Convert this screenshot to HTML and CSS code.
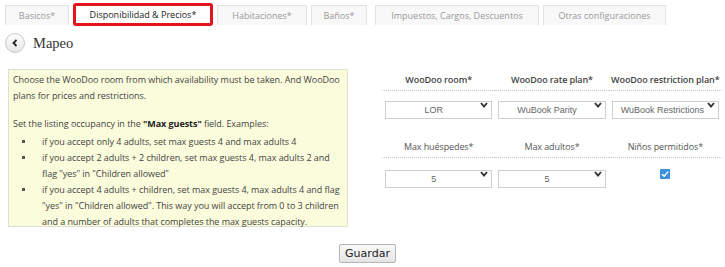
FILE: index.html
```html
<!DOCTYPE html>
<html lang="es">
<head>
    <meta charset="UTF-8">
    <meta name="viewport" content="width=device-width, initial-scale=1.0">
    <title>Mapeo</title>
    <link rel="stylesheet" href="styles.css">
</head>
<body>

<div class="tabs">
    <div class="tab tab-basicos">Basicos*</div>
    <div class="tab tab-active">Disponibilidad &amp; Precios*</div>
    <div class="tab tab-habitaciones">Habitaciones*</div>
    <div class="tab tab-banos">Baños*</div>
    <div class="tab tab-impuestos">Impuestos, Cargos, Descuentos</div>
    <div class="tab tab-otras">Otras configuraciones</div>
</div>

<div class="title-row">
    <button class="back-button" aria-label="Volver">
        <svg width="8" height="8" viewBox="0 0 8 8"><polyline points="5.5,1 2.5,4 5.5,7" fill="none" stroke="#222" stroke-width="1.8"/></svg>
    </button>
    <h2 class="title">Mapeo</h2>
</div>

<div class="mapping">
    <div class="help-box">
        <p>Choose the WooDoo room from which availability must be taken. And WooDoo plans for prices and restrictions.</p>
        <p class="tight">Set the listing occupancy in the <b>"Max guests"</b> field. Examples:</p>
        <ul>
            <li>if you accept only 4 adults, set max guests 4 and max adults 4</li>
            <li>if you accept 2 adults + 2 children, set max guests 4, max adults 2 and flag "yes" in "Children allowed"</li>
            <li>if you accept 4 adults + children, set max guests 4, max adults 4 and flag "yes" in "Children allowed". This way you will accept from 0 to 3 children and a number of adults that completes the max guests capacity.</li>
        </ul>
    </div>

    <div class="fields">
        <div class="field-head strong">WooDoo room*</div>
        <div class="field-head strong">WooDoo rate plan*</div>
        <div class="field-head strong">WooDoo restriction plan*</div>

        <div class="field-cell">
            <div class="select-wrap">
                <select class="select"><option>LOR</option></select>
                <svg class="chevron" width="8" height="6" viewBox="0 0 8 6"><polyline points="1,1 4,4.5 7,1" fill="none" stroke="#333" stroke-width="1.9"/></svg>
            </div>
        </div>
        <div class="field-cell">
            <div class="select-wrap">
                <select class="select"><option>WuBook Parity</option></select>
                <svg class="chevron" width="8" height="6" viewBox="0 0 8 6"><polyline points="1,1 4,4.5 7,1" fill="none" stroke="#333" stroke-width="1.9"/></svg>
            </div>
        </div>
        <div class="field-cell">
            <div class="select-wrap">
                <select class="select select-wide"><option>WuBook Restrictions</option></select>
                <svg class="chevron" width="8" height="6" viewBox="0 0 8 6"><polyline points="1,1 4,4.5 7,1" fill="none" stroke="#333" stroke-width="1.9"/></svg>
            </div>
        </div>

        <div class="field-head second">Max huéspedes*</div>
        <div class="field-head second">Max adultos*</div>
        <div class="field-head second">Niños permitidos*</div>

        <div class="field-cell second-row">
            <div class="select-wrap">
                <select class="select"><option>5</option></select>
                <svg class="chevron" width="8" height="6" viewBox="0 0 8 6"><polyline points="1,1 4,4.5 7,1" fill="none" stroke="#333" stroke-width="1.9"/></svg>
            </div>
        </div>
        <div class="field-cell second-row">
            <div class="select-wrap">
                <select class="select"><option>5</option></select>
                <svg class="chevron" width="8" height="6" viewBox="0 0 8 6"><polyline points="1,1 4,4.5 7,1" fill="none" stroke="#333" stroke-width="1.9"/></svg>
            </div>
        </div>
        <div class="field-cell check-cell">
            <span class="checkbox">
                <svg width="10" height="10" viewBox="0 0 10 10"><polyline points="2,5.2 4.2,7.3 8.2,2.6" fill="none" stroke="#fff" stroke-width="1.4"/></svg>
            </span>
        </div>
    </div>
</div>

<div class="actions">
    <button class="save-button">Guardar</button>
</div>

</body>
</html>
```

FILE: styles.css
```css
body {
    margin: 0;
    padding: 0;
    background-color: #fff;
    font-family: "Open Sans", sans-serif;
    color: #444;
}
.tabs {
    display: flex;
    align-items: center;
    gap: 4px;
    height: 23px;
    margin-top: 3px;
    padding-left: 5px;
}
.tab {
    box-sizing: border-box;
    height: 20px;
    line-height: 19px;
    text-align: center;
    font-size: 9px;
    color: #999;
    background-color: #f8f8f8;
    border: 1px solid #e3e3e3;
    border-bottom: none;
}
.tab-basicos { width: 64px; }
.tab-habitaciones { width: 90px; }
.tab-banos { width: 56px; margin-right: 4px; }
.tab-impuestos { width: 164px; }
.tab-otras { width: 123px; }
.tab-active {
    width: 140px;
    height: 23px;
    line-height: 17px;
    color: #222;
    background-color: #fff;
    border: 3px solid #e3141b;
    border-radius: 3px;
}
.title-row {
    display: flex;
    align-items: center;
    gap: 8px;
    height: 20px;
    margin-top: 7px;
    padding-left: 5px;
}
.back-button {
    box-sizing: border-box;
    width: 20px;
    height: 20px;
    padding: 0;
    display: flex;
    align-items: center;
    justify-content: center;
    border: 1px solid #c8c8c8;
    border-radius: 50%;
    background: linear-gradient(#fdfdfd, #e6e6e6);
}
.title {
    margin: 0;
    font-family: "Liberation Serif", serif;
    font-size: 14.5px;
    font-weight: normal;
    color: #333;
}
.mapping {
    display: flex;
    align-items: flex-start;
    gap: 34px;
    margin-top: 16px;
    padding-left: 8px;
}
.help-box {
    box-sizing: border-box;
    width: 340px;
    height: 158px;
    padding: 2px 5px 0 4px;
    background-color: #fbfcdc;
    border: 1px solid #e0e0d0;
    font-size: 9px;
    letter-spacing: -0.05px;
    line-height: 16px;
    color: #444;
}
.help-box p {
    margin: 0 0 12px;
}
.help-box p.tight {
    margin-bottom: 2px;
}
.help-box b {
    color: #222;
}
.help-box ul {
    margin: 0;
    padding: 0 0 0 29px;
    list-style: none;
}
.help-box li::before {
    content: "";
    display: inline-block;
    width: 3px;
    height: 3px;
    margin-left: -20px;
    margin-right: 17px;
    vertical-align: 2px;
    background-color: #555;
}
.fields {
    width: 340px;
    display: grid;
    grid-template-columns: repeat(3, 1fr);
    align-content: start;
}
.field-head {
    height: 20px;
    margin-top: 1px;
    line-height: 20px;
    white-space: nowrap;
    text-align: center;
    font-size: 9px;
    letter-spacing: -0.1px;
    color: #444;
    border-bottom: 1px dotted #c8c8c8;
}
.field-head.strong {
    font-weight: 600;
}
.field-head.second {
    margin-top: 18px;
    color: #555;
}
.field-cell {
    padding: 5px 3px 0;
}
.field-cell.second-row {
    padding-top: 7px;
}
.select-wrap {
    position: relative;
}
.select {
    box-sizing: border-box;
    width: 100%;
    height: 18px;
    padding: 0 14px 0 4px;
    appearance: none;
    -webkit-appearance: none;
    background-color: #fff;
    border: 1px solid #cfcfcf;
    border-radius: 0;
    font-family: "Liberation Sans", Arial, sans-serif;
    font-size: 9px;
    color: #666;
    text-align: center;
    text-align-last: center;
}
.select-wide {
    padding-right: 10px;
}
.chevron {
    position: absolute;
    right: 4px;
    top: 6px;
}
.check-cell {
    display: flex;
    justify-content: center;
    padding-top: 11px;
}
.checkbox {
    width: 10px;
    height: 10px;
    display: block;
    background-color: #3d8fe0;
    border-radius: 1px;
}
.checkbox svg {
    display: block;
}
.actions {
    display: flex;
    justify-content: center;
    margin-top: 17px;
    padding-left: 10px;
}
.save-button {
    height: 19px;
    padding: 0 5px;
    font-family: "DejaVu Sans", sans-serif;
    font-size: 11px;
    color: #222;
    background: linear-gradient(#fafafa, #e4e4e4);
    border: 1px solid #b5b5b5;
    border-radius: 2px;
}
```
